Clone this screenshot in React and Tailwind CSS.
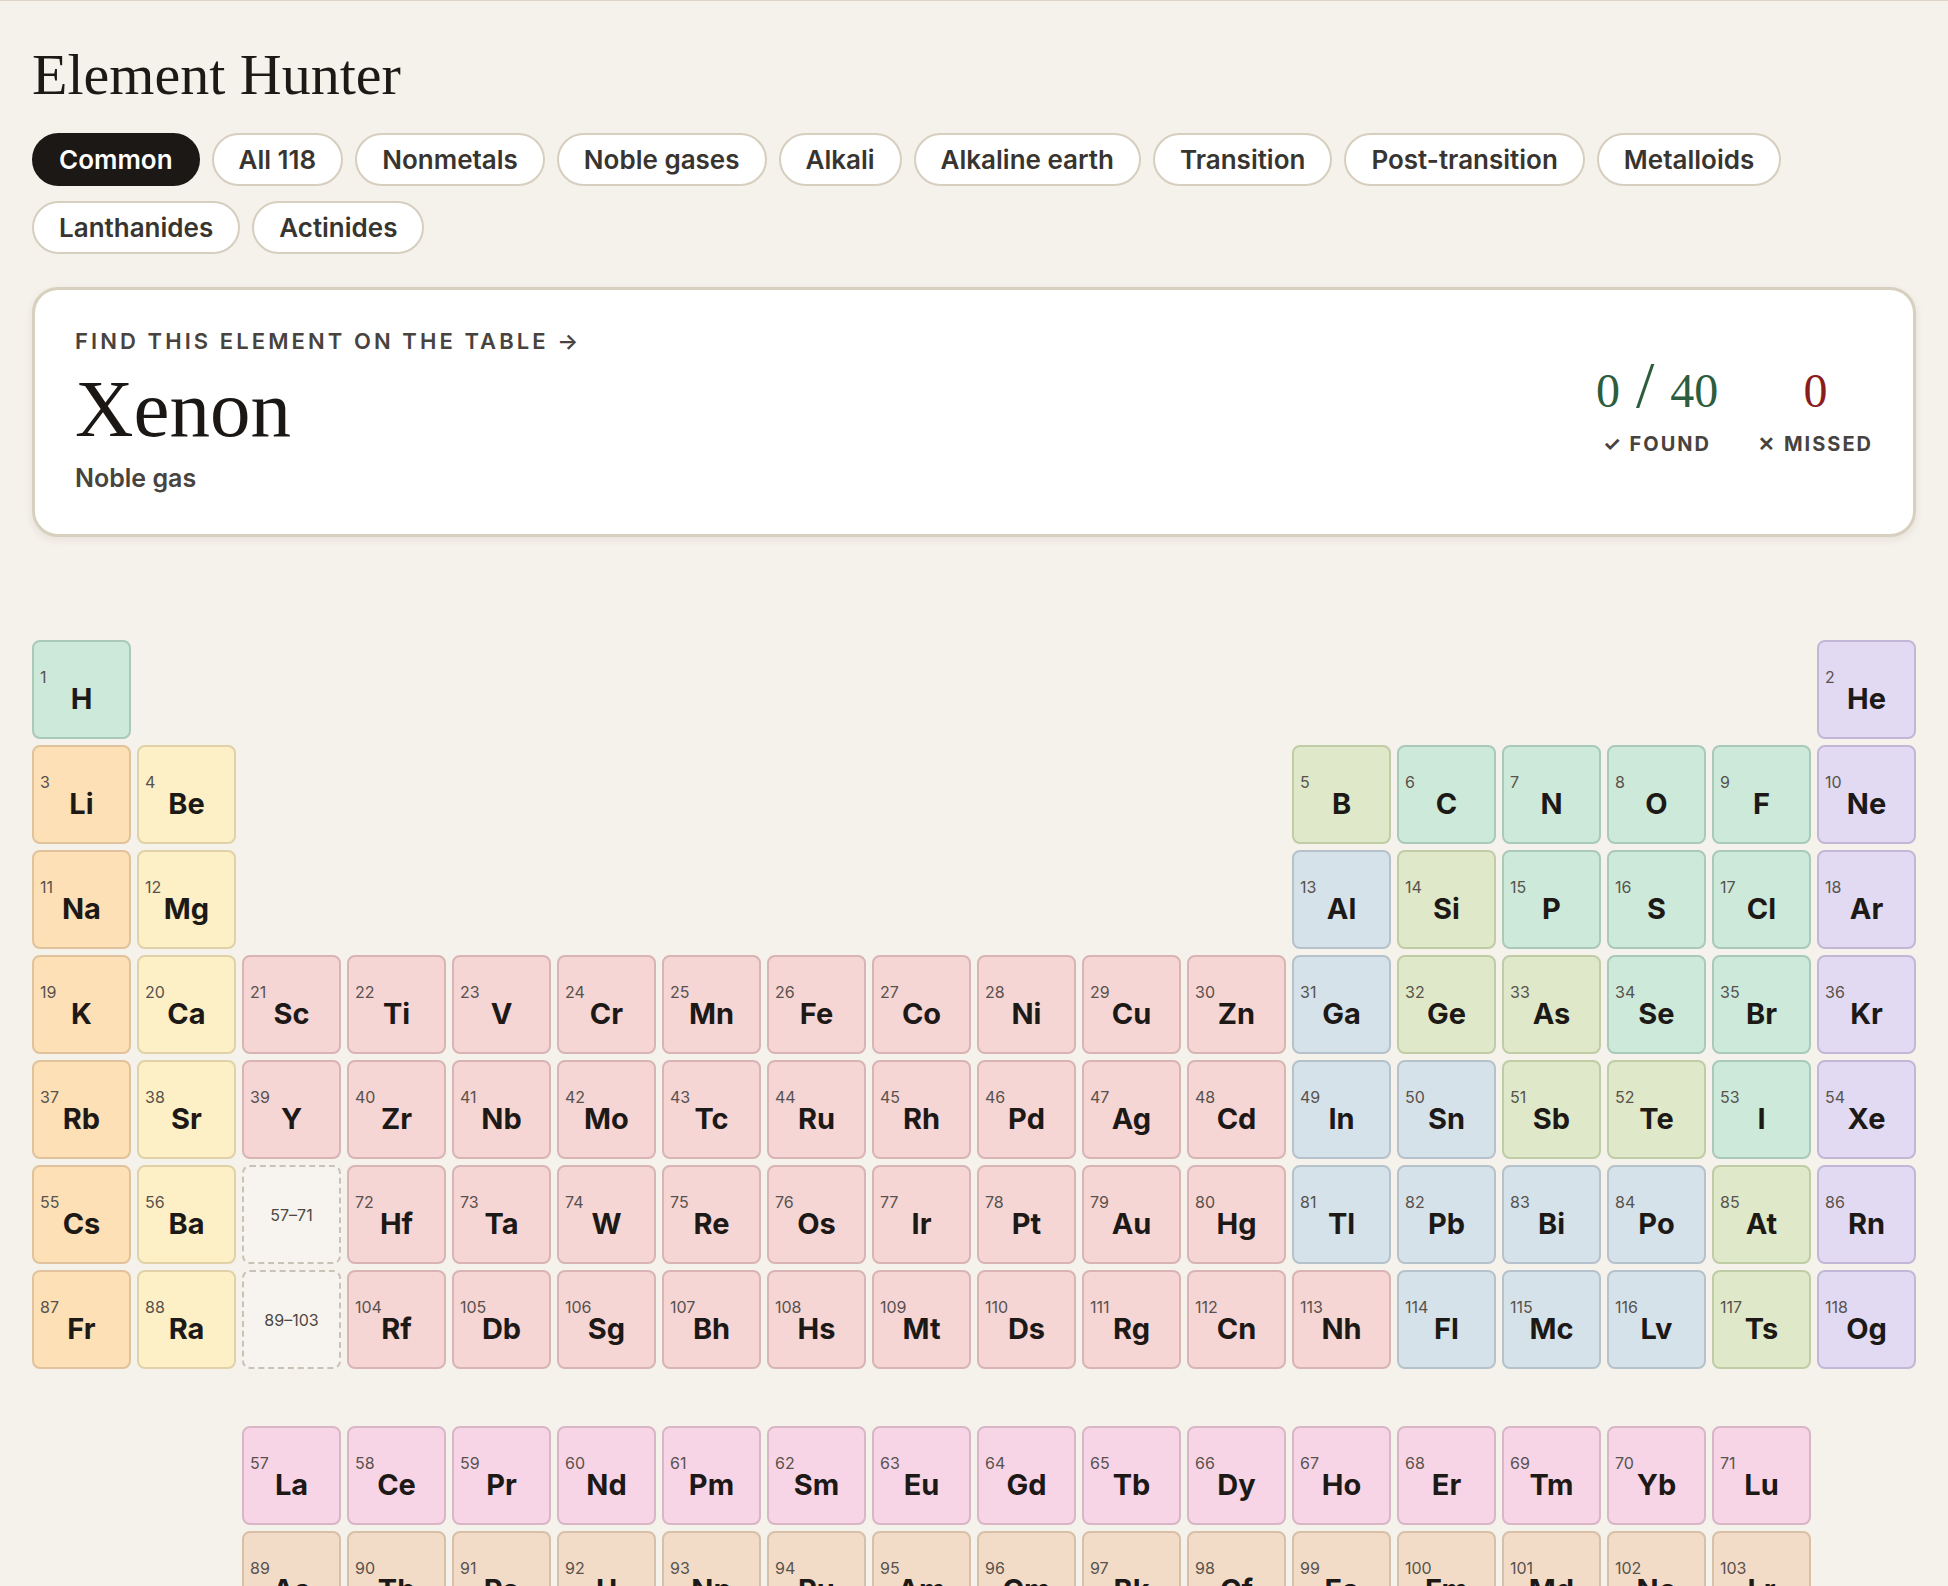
import React from "react";

const CAT = {
  nm: "bg-[#cde9da] border-[#a9cab8]",
  ng: "bg-[#e2daf2] border-[#c3b7d7]",
  ak: "bg-[#fde0b6] border-[#e0c39c]",
  ae: "bg-[#fdf0c6] border-[#e0d2a6]",
  tr: "bg-[#f6d5d5] border-[#d8b4b4]",
  pt: "bg-[#d6e2ea] border-[#b5c2cb]",
  md: "bg-[#dfe9c9] border-[#bfcca5]",
  ln: "bg-[#f7d5e6] border-[#d9b6c6]",
  ac: "bg-[#f3dcc7] border-[#d8c0a8]",
};

const ROWS = [
  ["1:H:nm", "_", "_", "_", "_", "_", "_", "_", "_", "_", "_", "_", "_", "_", "_", "_", "_", "2:He:ng"],
  ["3:Li:ak", "4:Be:ae", "_", "_", "_", "_", "_", "_", "_", "_", "_", "_", "5:B:md", "6:C:nm", "7:N:nm", "8:O:nm", "9:F:nm", "10:Ne:ng"],
  ["11:Na:ak", "12:Mg:ae", "_", "_", "_", "_", "_", "_", "_", "_", "_", "_", "13:Al:pt", "14:Si:md", "15:P:nm", "16:S:nm", "17:Cl:nm", "18:Ar:ng"],
  ["19:K:ak", "20:Ca:ae", "21:Sc:tr", "22:Ti:tr", "23:V:tr", "24:Cr:tr", "25:Mn:tr", "26:Fe:tr", "27:Co:tr", "28:Ni:tr", "29:Cu:tr", "30:Zn:tr", "31:Ga:pt", "32:Ge:md", "33:As:md", "34:Se:nm", "35:Br:nm", "36:Kr:ng"],
  ["37:Rb:ak", "38:Sr:ae", "39:Y:tr", "40:Zr:tr", "41:Nb:tr", "42:Mo:tr", "43:Tc:tr", "44:Ru:tr", "45:Rh:tr", "46:Pd:tr", "47:Ag:tr", "48:Cd:tr", "49:In:pt", "50:Sn:pt", "51:Sb:md", "52:Te:md", "53:I:nm", "54:Xe:ng"],
  ["55:Cs:ak", "56:Ba:ae", "P:57–71", "72:Hf:tr", "73:Ta:tr", "74:W:tr", "75:Re:tr", "76:Os:tr", "77:Ir:tr", "78:Pt:tr", "79:Au:tr", "80:Hg:tr", "81:Tl:pt", "82:Pb:pt", "83:Bi:pt", "84:Po:pt", "85:At:md", "86:Rn:ng"],
  ["87:Fr:ak", "88:Ra:ae", "P:89–103", "104:Rf:tr", "105:Db:tr", "106:Sg:tr", "107:Bh:tr", "108:Hs:tr", "109:Mt:tr", "110:Ds:tr", "111:Rg:tr", "112:Cn:tr", "113:Nh:tr", "114:Fl:pt", "115:Mc:pt", "116:Lv:pt", "117:Ts:md", "118:Og:ng"],
];

const LAN = ["La", "Ce", "Pr", "Nd", "Pm", "Sm", "Eu", "Gd", "Tb", "Dy", "Ho", "Er", "Tm", "Yb", "Lu"];
const ACT = ["Ac", "Th", "Pa", "U", "Np", "Pu", "Am", "Cm", "Bk", "Cf", "Es", "Fm", "Md", "No", "Lr"];

const F_ROWS = [
  ["_", "_", ...LAN.map((s, i) => `${57 + i}:${s}:ln`), "_"],
  ["_", "_", ...ACT.map((s, i) => `${89 + i}:${s}:ac`), "_"],
];

function Cell({ spec }) {
  if (spec === "_") return <div className="aspect-square" />;
  if (spec.startsWith("P:")) {
    return (
      <div className="aspect-square rounded-[8px] border-2 border-dashed border-[#c9c2b7] bg-[#f7f4ef] flex items-center justify-center text-[16px] leading-none text-[#4d4843]">
        {spec.slice(2)}
      </div>
    );
  }
  const [n, sym, cat] = spec.split(":");
  return (
    <div className={`aspect-square rounded-[8px] border-2 flex flex-col px-[5px] pt-[27px] ${CAT[cat]}`}>
      <span className="pl-[1px] text-[16px] leading-none text-[#57524d]">{n}</span>
      <span className="text-[29px] leading-none font-bold text-center text-[#1c1917] -mt-[1px]">{sym}</span>
    </div>
  );
}

const PILLS = ["Common", "All 118", "Nonmetals", "Noble gases", "Alkali", "Alkaline earth", "Transition", "Post-transition", "Metalloids", "Lanthanides", "Actinides"];

export default function App() {
  return (
    <div className="min-h-screen bg-[#f5f1eb] border-t border-[#ddd6c8] font-['Inter',sans-serif] px-8 pt-[45px] pb-16">
      <h1 className="font-['Liberation_Serif',serif] text-[58px] leading-none font-normal text-[#1c1917]">Element Hunter</h1>

      <div className="mt-[29px] flex flex-wrap gap-x-[12px] gap-y-[15px]">
        {PILLS.map((p, i) => (
          <button
            key={p}
            className={
              i === 0
                ? "h-[53px] px-[25px] rounded-full border-2 border-[#1c1816] bg-[#1c1816] text-white text-[26px] font-semibold leading-none"
                : "h-[53px] px-[25px] rounded-full border-2 border-[#d6cebe] bg-white text-[#38342f] text-[26px] font-semibold leading-none"
            }
          >
            {p}
          </button>
        ))}
      </div>

      <div className="mt-[33px] rounded-[26px] border-[3px] border-[#d8d0bf] bg-white shadow-[0_3px_8px_rgba(60,50,30,0.08)] px-[40px] pt-[40px] pb-[43px] flex items-start justify-between">
        <div className="flex flex-col">
          <div className="text-[22px] leading-none font-semibold tracking-[0.14em] text-[#48433e]">FIND THIS ELEMENT ON THE TABLE →</div>
          <div className="mt-[17px] font-['Liberation_Serif',serif] text-[81px] leading-none text-[#1a1715]">Xenon</div>
          <div className="mt-[16px] text-[25px] leading-none font-semibold text-[#48433e]">Noble gas</div>
        </div>
        <div className="mt-[22px] flex gap-[40px] items-start">
          <div className="flex flex-col items-center">
            <div className="font-['Liberation_Serif',serif] text-[66px] leading-none text-[#2c5d3e] whitespace-nowrap">
              <span className="text-[48px]">0</span>
              <span className="mx-[16px]">/</span>
              <span className="text-[48px]">40</span>
            </div>
            <div className="mt-[16px] text-[20px] leading-none font-bold tracking-[0.1em] text-[#48433e] whitespace-nowrap">✓ FOUND</div>
          </div>
          <div className="flex flex-col items-center">
            <div className="font-['Liberation_Serif',serif] text-[66px] leading-none text-[#8b1c1c]">
              <span className="text-[48px]">0</span>
            </div>
            <div className="mt-[16px] text-[20px] leading-none font-bold tracking-[0.1em] text-[#48433e] whitespace-nowrap">✕ MISSED</div>
          </div>
        </div>
      </div>

      <div className="mt-[103px] grid grid-cols-[repeat(18,minmax(0,1fr))] gap-[6px]">
        {ROWS.flat().map((s, i) => (
          <Cell key={i} spec={s} />
        ))}
      </div>

      <div className="mt-[57px] grid grid-cols-[repeat(18,minmax(0,1fr))] gap-[6px]">
        {F_ROWS.flat().map((s, i) => (
          <Cell key={i} spec={s} />
        ))}
      </div>
    </div>
  );
}
